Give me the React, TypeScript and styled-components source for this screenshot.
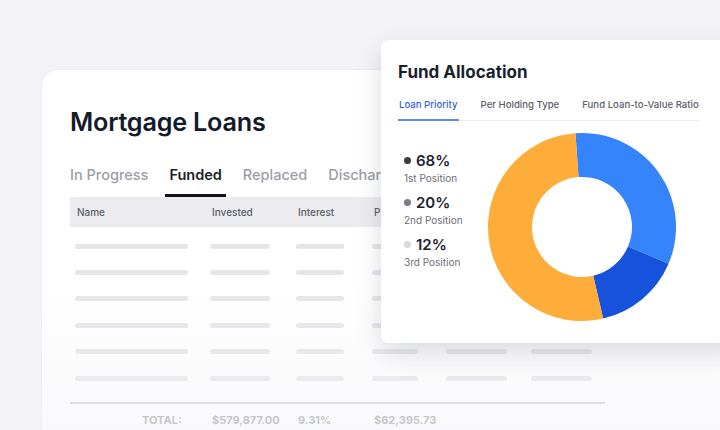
import React from 'react';
import styled, { createGlobalStyle } from 'styled-components';

const GlobalStyle = createGlobalStyle`
  body {
    margin: 0;
    background: #f3f3f7;
    font-family: Inter, "Noto Sans", sans-serif;
  }
`;

const columns = '135px 86px 76px 74px 85px 1fr';
const barWidths = [113, 60, 48, 46, 61, 61];
// последние колонки целиком под карточкой, заголовки там не видны
const headers = ['Name', 'Invested', 'Interest', 'Principal', '', ''];
const totals = ['TOTAL:', '$579,877.00', '9.31%', '$62,395.73', '', ''];

const legend = [
    { value: '68%', label: '1st Position', color: '#3a3c44' },
    { value: '20%', label: '2nd Position', color: '#7b7d86' },
    { value: '12%', label: '3rd Position', color: '#d8d9dd' },
];

// углы по часовой от 12 часов, как на картинке
const segments = [
    { from: -4, to: 113, color: '#3584fb' },
    { from: 113, to: 167, color: '#1652dc' },
    { from: 167, to: 356, color: '#ffad3a' },
];

function point(cx: number, cy: number, r: number, deg: number) {
    const a = (deg - 90) * Math.PI / 180;
    return `${(cx + r * Math.cos(a)).toFixed(2)} ${(cy + r * Math.sin(a)).toFixed(2)}`;
}

function arc(from: number, to: number) {
    const c = 94, R = 94, r = 50;
    const large = to - from > 180 ? 1 : 0;
    return `M ${point(c, c, R, from)} A ${R} ${R} 0 ${large} 1 ${point(c, c, R, to)} `
        + `L ${point(c, c, r, to)} A ${r} ${r} 0 ${large} 0 ${point(c, c, r, from)} Z`;
}

const App: React.FC = () => {
    return (
        <>
            <GlobalStyle />
            <Stage>
                <MainCard>
                    <Title>Mortgage Loans</Title>
                    <Tabs>
                        <Tab>In Progress</Tab>
                        <Tab $active>Funded</Tab>
                        <Tab>Replaced</Tab>
                        <Tab>Discharged</Tab>
                    </Tabs>
                    <Table>
                        <HeaderRow>
                            {headers.map((h, i) => <HeaderCell key={i}>{h}</HeaderCell>)}
                        </HeaderRow>
                        <Body>
                            {[0, 1, 2, 3, 4, 5].map(row => (
                                <Row key={row}>
                                    {barWidths.map((w, i) => (
                                        <Cell key={i}><Bar style={{ width: w }} /></Cell>
                                    ))}
                                </Row>
                            ))}
                        </Body>
                        <TotalRow>
                            {totals.map((t, i) => (
                                <TotalCell key={i} $first={i === 0}>{t}</TotalCell>
                            ))}
                        </TotalRow>
                    </Table>
                </MainCard>
                <Fade />
                <AllocationCard>
                    <CardTitle>Fund Allocation</CardTitle>
                    <SubTabs>
                        <SubTab $active>Loan Priority</SubTab>
                        <SubTab>Per Holding Type</SubTab>
                        <SubTab>Fund Loan-to-Value Ratio</SubTab>
                    </SubTabs>
                    <ChartRow>
                        <Legend>
                            {legend.map(item => (
                                <LegendItem key={item.label}>
                                    <LegendValue>
                                        <Dot $color={item.color} />
                                        {item.value}
                                    </LegendValue>
                                    <LegendLabel>{item.label}</LegendLabel>
                                </LegendItem>
                            ))}
                        </Legend>
                        <svg width="188" height="188" viewBox="0 0 188 188">
                            {segments.map(s => (
                                <path key={s.color} d={arc(s.from, s.to)} fill={s.color} />
                            ))}
                        </svg>
                    </ChartRow>
                </AllocationCard>
            </Stage>
        </>
    );
};

export default App;

// Стили
const Stage = styled.div`
  position: relative;
  width: 720px;
  height: 430px;
  overflow: hidden;
  padding: 70px 0 0 42px;
  box-sizing: border-box;
`;

const MainCard = styled.div`
  width: 720px;
  height: 420px;
  background: #ffffff;
  border-radius: 16px 0 0 0;
  box-shadow: 0 0 0 1px #ececf1;
  padding: 36px 0 0 28px;
  box-sizing: border-box;
`;

const Title = styled.h1`
  margin: 0;
  font-size: 25.2px;
  line-height: 32px;
  font-weight: 600;
  color: #151a28;
  letter-spacing: -0.2px;
`;

const Tabs = styled.div`
  display: flex;
  gap: 13px;
  margin: 27px 0 0 -4px;
`;

const Tab = styled.div<{ $active?: boolean }>`
  padding: 0 4px 9px;
  font-size: 14.5px;
  line-height: 20px;
  font-weight: ${p => (p.$active ? 600 : 500)};
  color: ${p => (p.$active ? '#1b1e28' : '#9b9da6')};
  border-bottom: 3px solid ${p => (p.$active ? '#111318' : 'transparent')};
  white-space: nowrap;
`;

const Table = styled.div`
  width: 535px;
`;

const HeaderRow = styled.div`
  display: grid;
  grid-template-columns: ${columns};
  align-items: center;
  height: 30px;
  padding-left: 5px;
  background: #ececf0;
`;

const HeaderCell = styled.div`
  padding-left: 2px;
  font-size: 10px;
  font-weight: 500;
  color: #5b5e68;
  white-space: nowrap;
  overflow: hidden;
`;

const Body = styled.div`
  padding-top: 6px;
  border-bottom: 2px solid #cfcfd4;
  padding-bottom: 11px;
`;

const Row = styled.div`
  display: grid;
  grid-template-columns: ${columns};
  align-items: center;
  height: 26.4px;
  padding-left: 5px;
`;

const Cell = styled.div`
  display: flex;
  align-items: center;
`;

const Bar = styled.div`
  height: 5px;
  border-radius: 3px;
  background: #e5e5ea;
`;

const TotalRow = styled.div`
  display: grid;
  grid-template-columns: ${columns};
  align-items: center;
  height: 31px;
  padding-left: 5px;
`;

const TotalCell = styled.div<{ $first?: boolean }>`
  padding-left: ${p => (p.$first ? '67px' : '2px')};
  font-size: 11px;
  font-weight: 700;
  color: #9c9ea5;
  white-space: nowrap;
`;

const Fade = styled.div`
  position: absolute;
  left: 0;
  right: 0;
  bottom: 0;
  height: 150px;
  background: linear-gradient(to bottom, rgba(243, 243, 247, 0), rgba(243, 243, 247, 0.5));
  pointer-events: none;
`;

const AllocationCard = styled.div`
  position: absolute;
  left: 381px;
  top: 40px;
  width: 360px;
  height: 303px;
  background: #ffffff;
  border-radius: 8px;
  box-shadow: 0 10px 26px rgba(30, 32, 60, 0.15);
  padding: 21px 0 0 17px;
  box-sizing: border-box;
`;

const CardTitle = styled.h2`
  margin: 0;
  font-size: 17px;
  line-height: 22px;
  font-weight: 700;
  color: #1a1f2c;
`;

const SubTabs = styled.div`
  display: flex;
  gap: 21px;
  width: 302px;
  margin-top: 15px;
  border-bottom: 1px solid #efeff2;
`;

const SubTab = styled.div<{ $active?: boolean }>`
  padding: 0 1px 7px;
  margin-bottom: -1px;
  font-size: 9.6px;
  line-height: 14px;
  font-weight: 500;
  color: ${p => (p.$active ? '#3a63d8' : '#5d6069')};
  border-bottom: 2px solid ${p => (p.$active ? '#5b8def' : 'transparent')};
  white-space: nowrap;
`;

const ChartRow = styled.div`
  display: flex;
  align-items: flex-start;
  margin-top: 12px;
`;

const Legend = styled.div`
  display: flex;
  flex-direction: column;
  gap: 9px;
  width: 84px;
  margin-left: 6px;
  padding-top: 19px;
  box-sizing: border-box;
`;

const LegendItem = styled.div`
  display: flex;
  flex-direction: column;
  gap: 3px;
`;

const LegendValue = styled.div`
  display: flex;
  align-items: center;
  gap: 5px;
  font-size: 15px;
  line-height: 17px;
  font-weight: 600;
  color: #1e2230;
`;

const Dot = styled.span<{ $color: string }>`
  width: 7px;
  height: 7px;
  border-radius: 50%;
  background: ${p => p.$color};
`;

const LegendLabel = styled.div`
  font-size: 10px;
  line-height: 13px;
  color: #6c6f78;
`;
